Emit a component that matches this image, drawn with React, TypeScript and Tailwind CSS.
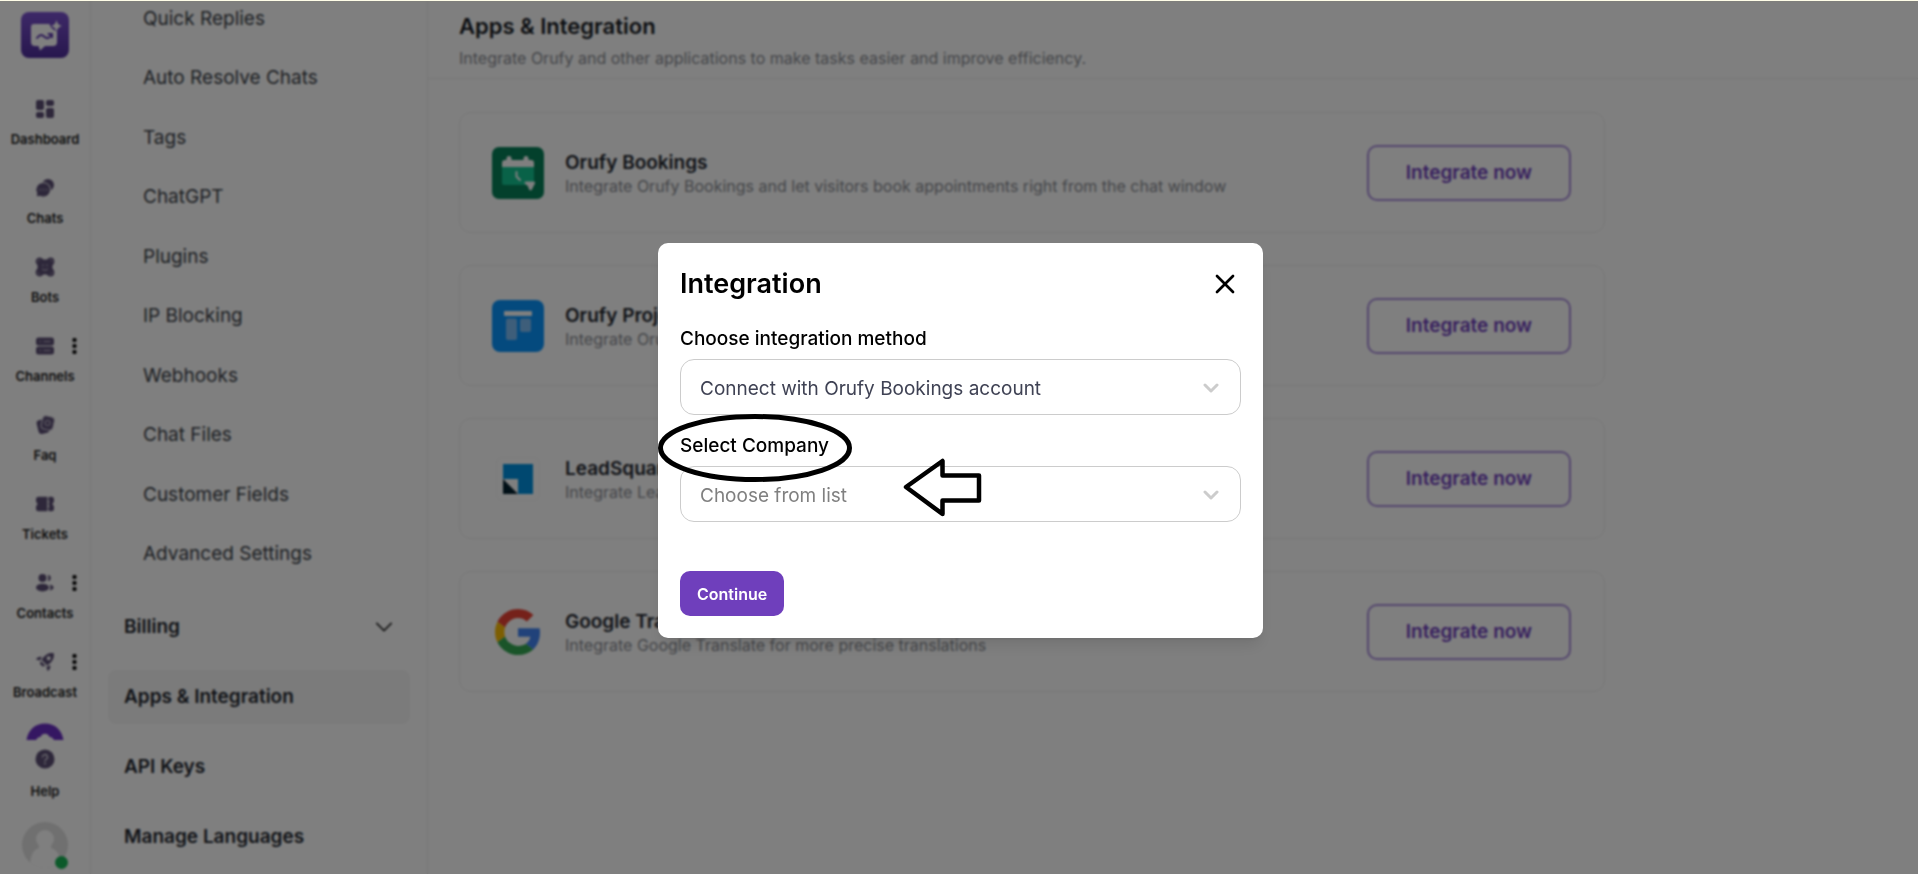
import React, { useState } from 'react';
import { X } from 'lucide-react';

type IconProps = { className?: string };

const DashboardIcon = () => (
  <svg viewBox="0 0 20 20" className="size-5" fill="currentColor">
    <rect x="1" y="1" width="8" height="10" rx="2" />
    <rect x="11" y="1" width="8" height="6" rx="2" />
    <rect x="1" y="13" width="8" height="6" rx="2" />
    <rect x="11" y="9" width="8" height="10" rx="2" />
  </svg>
);

const ChatsIcon = () => (
  <svg viewBox="0 0 20 20" className="size-5" fill="currentColor">
    <circle cx="13" cy="7" r="6" />
    <path d="M8.300 4.500a7.300 7.300 0 1 1-3.400 13.800L1.200 19l.6-3.600A7.300 7.300 0 0 1 8.300 4.500z" stroke="#fff" strokeWidth="1" />
    <g fill="#bbb5c6">
      <circle cx="5.200" cy="11.800" r=".8" />
      <circle cx="8.400" cy="11.800" r=".8" />
      <circle cx="11.600" cy="11.800" r=".8" />
    </g>
  </svg>
);

const BotsIcon = () => (
  <svg viewBox="0 0 20 20" className="size-5" fill="currentColor">
    <rect x="2.500" y="2.500" width="15" height="15" rx="3" />
    <g fill="none" stroke="currentColor" strokeWidth="1.800">
      <circle cx="4.500" cy="4.500" r="3" />
      <circle cx="15.500" cy="4.500" r="3" />
      <circle cx="4.500" cy="15.500" r="3" />
      <circle cx="15.500" cy="15.500" r="3" />
    </g>
    <path d="M8 7.800v1M12 7.800v1M7.600 12.200c1.400 1.200 3.400 1.200 4.800 0" stroke="#bbb5c6" strokeWidth="1.100" strokeLinecap="round" fill="none" />
  </svg>
);

const ChannelsIcon = () => (
  <svg viewBox="0 0 20 20" className="size-5" fill="currentColor">
    <rect x="1" y="1.500" width="18" height="8" rx="2.500" />
    <rect x="1" y="10.500" width="18" height="8" rx="2.500" />
    <path d="M5 5.500h.5M9 5.500h6M5 14.500h.5M9 14.500h6" stroke="#bbb5c6" strokeWidth="1.200" strokeLinecap="round" />
  </svg>
);

const FaqIcon = () => (
  <svg viewBox="0 0 20 20" className="size-5" fill="currentColor">
    <rect x="2.500" y="4.500" width="11" height="14" rx="3" transform="rotate(-14 8 11.500)" />
    <rect x="6.800" y="1.300" width="12" height="13.500" rx="3.500" transform="rotate(12 13 8)" stroke="#d8d4df" strokeWidth="1" />
    <circle cx="12.600" cy="8" r="2.500" fill="none" stroke="#bbb5c6" strokeWidth="1.100" />
  </svg>
);

const TicketsIcon = () => (
  <svg viewBox="0 0 20 20" className="size-5" fill="currentColor">
    <path d="M3.500 2.700h8.900v14.600H3.500A2.500 2.500 0 0 1 1 14.800v-2.900a2 2 0 0 0 0-3.800V5.200a2.500 2.500 0 0 1 2.500-2.500z" />
    <path d="M14 2.700h2.500A2.500 2.500 0 0 1 19 5.200v2.900a2 2 0 0 0 0 3.800v2.900a2.500 2.500 0 0 1-2.500 2.500H14l-.9-2.300.9-2.400v-1.600l-.9-1.100.9-1.100V7.500l-.9-2.400z" />
  </svg>
);

const ContactsIcon = () => (
  <svg viewBox="0 0 20 20" className="size-5" fill="currentColor">
    <circle cx="7.500" cy="5" r="4" />
    <path d="M12.800 2a3 3 0 0 1 0 6c.7-1.800.7-4.200 0-6z" />
    <ellipse cx="7.500" cy="14.600" rx="6.500" ry="3.900" />
    <path d="M14.600 11.800c2.600.3 4 1.400 4 2.800s-1.400 2.500-4 2.800c1-1.700 1-3.900 0-5.600z" />
  </svg>
);

const BroadcastIcon = () => (
  <svg viewBox="0 0 20 20" className="size-5" fill="currentColor">
    <path fillRule="evenodd" d="M18.800 1.200c.6 4.600-.8 8-6.600 12.300l-5.700-5.700C10.800 2 14.200.6 18.800 1.200zM13.700 4.300a2 2 0 1 0 0 4 2 2 0 0 0 0-4z" />
    <path d="M6.800 4.800 5.200 8.600 1 7.500c1-2.400 3.200-3.200 5.800-2.700zM15.200 13.200l-3.800 1.600 1.100 4.200c2.400-1 3.200-3.200 2.700-5.800z" />
    <path d="M5.800 9 10.600 13.700 7.600 14.600 4.900 12z" />
  </svg>
);

const HelpIcon = () => (
  <svg viewBox="0 0 20 20" className="size-5">
    <circle cx="10" cy="10" r="9.500" fill="currentColor" />
    <path d="M7.500 8a2.500 2.500 0 1 1 3.700 2.200c-.8.500-1.200.9-1.200 1.800" fill="none" stroke="#d8d4df" strokeWidth="1.300" strokeLinecap="round" />
    <circle cx="10" cy="14.500" r=".9" fill="#d8d4df" />
  </svg>
);

const ConnectLogo = () => (
  <svg viewBox="0 0 48 46" className="h-[46px] w-12">
    <defs>
      <linearGradient id="logoFill" x1="0" y1="0" x2="0" y2="1">
        <stop offset="0" stopColor="#7c52d0" />
        <stop offset="1" stopColor="#4f2f9c" />
      </linearGradient>
    </defs>
    <rect width="48" height="46" rx="8" fill="url(#logoFill)" />
    <path d="M13 12h15.500c.5 3 3.500 6 7.500 7.500V30a4 4 0 0 1-4 4h-8l-5 4.500L17.500 34H14a4 4 0 0 1-4-4V15a3 3 0 0 1 3-3z" fill="#fff" />
    <path d="M16 26c3-4 5-3.500 7.500-1.200s4.500 1.700 7.500-2.300M27.500 22h3.500v3.200" fill="none" stroke="#5f39b0" strokeWidth="2" strokeLinecap="round" strokeLinejoin="round" />
    <path d="M35.500 8c1 3.900 2.200 5.200 6 6-3.800.9-5 2.200-6 6-1-3.800-2.200-5.100-6-6 3.800-.8 5-2.100 6-6z" fill="#fff" />
  </svg>
);

const BookingsLogo = () => (
  <svg viewBox="0 0 52 52" className="size-[52px]">
    <rect width="52" height="52" rx="7" fill="#068058" />
    <path d="M10 20h32v18H12a2 2 0 0 1-2-2z" fill="#13c491" />
    <path d="M10 20v-4a3 3 0 0 1 3-3h1.500v-1.500a2.500 2.500 0 0 1 5 0V13h12v-1.500a2.500 2.500 0 0 1 5 0V13H39a3 3 0 0 1 3 3v4z" fill="#fff" />
    <path d="M24.500 25v4.500l3.500 3.500" fill="none" stroke="#fff" strokeWidth="2" strokeLinecap="round" />
    <path d="M34 34.500h7.500a1.500 1.500 0 0 1 1.400 2l-3 6a1.500 1.500 0 0 1-2.700 0l-1.400-3.500-2.800-2.200c-1-.8-.4-2.300 1-2.300z" fill="#fff" />
  </svg>
);

const ProjectsLogo = () => (
  <svg viewBox="0 0 52 52" className="size-[52px]">
    <rect width="52" height="52" rx="8" fill="#0894fd" />
    <rect x="12" y="11" width="28" height="5" rx="1" fill="#fff" />
    <rect x="14" y="18.500" width="11" height="21.500" rx="2" fill="#7dbdf5" />
    <rect x="28" y="18.500" width="11" height="13.500" rx="2" fill="#7dbdf5" />
  </svg>
);

const LeadSquaredLogo = () => (
  <svg viewBox="0 0 52 52" className="size-[52px]">
    <rect x="4.500" y="4.500" width="43" height="43" rx="6" fill="#fff" stroke="#f5f5f5" />
    <path d="M11 11h30v30H26V26H11z" fill="#0091e0" />
    <path d="M11 26v15h15z" fill="#03202e" />
  </svg>
);

const GoogleLogo = () => (
  <svg viewBox="0 0 48 48" className="m-[3px] size-[46px]">
    <path fill="#EA4335" d="M24 9.500c3.540 0 6.710 1.220 9.210 3.600l6.850-6.850C35.900 2.380 30.470 0 24 0 14.620 0 6.510 5.380 2.560 13.220l7.980 6.190C12.430 13.720 17.740 9.500 24 9.500z" />
    <path fill="#4285F4" d="M46.980 24.550c0-1.570-.15-3.090-.38-4.550H24v9.020h12.940c-.58 2.960-2.260 5.480-4.780 7.180l7.730 6c4.510-4.180 7.090-10.360 7.090-17.650z" />
    <path fill="#FBBC05" d="M10.530 28.590c-.48-1.450-.76-2.990-.76-4.590s.27-3.140.76-4.590l-7.980-6.190C.92 16.460 0 20.120 0 24c0 3.880.92 7.540 2.560 10.780l7.970-6.190z" />
    <path fill="#34A853" d="M24 48c6.480 0 11.930-2.130 15.890-5.810l-7.730-6c-2.150 1.450-4.920 2.300-8.160 2.300-6.260 0-11.570-4.220-13.470-9.910l-7.980 6.190C6.510 42.620 14.620 48 24 48z" />
  </svg>
);

const MoreDots = () => (
  <svg viewBox="0 0 5 16" className="absolute left-[72px] top-[17px] h-4 w-[5px]" fill="#111">
    <rect x="0.500" y="0" width="4" height="4" rx="1" />
    <rect x="0.500" y="6" width="4" height="4" rx="1" />
    <rect x="0.500" y="12" width="4" height="4" rx="1" />
  </svg>
);

const Chevron = ({ className }: IconProps) => (
  <svg viewBox="0 0 16 10" className={className} fill="none" stroke="currentColor" strokeLinecap="round" strokeLinejoin="round">
    <path d="M2 2l6 6 6-6" />
  </svg>
);

const navItems = [
  { label: 'Dashboard', icon: DashboardIcon },
  { label: 'Chats', icon: ChatsIcon },
  { label: 'Bots', icon: BotsIcon },
  { label: 'Channels', icon: ChannelsIcon, more: true },
  { label: 'Faq', icon: FaqIcon },
  { label: 'Tickets', icon: TicketsIcon },
  { label: 'Contacts', icon: ContactsIcon, more: true },
  { label: 'Broadcast', icon: BroadcastIcon, more: true },
];

const settingsItems = [
  'Quick Replies',
  'Auto Resolve Chats',
  'Tags',
  'ChatGPT',
  'Plugins',
  'IP Blocking',
  'Webhooks',
  'Chat Files',
  'Customer Fields',
  'Advanced Settings',
];

const sections = [
  { label: 'Billing', expandable: true },
  { label: 'Apps & Integration', active: true },
  { label: 'API Keys' },
  { label: 'Manage Languages' },
];

const apps = [
  {
    name: 'Orufy Bookings',
    text: 'Integrate Orufy Bookings and let visitors book appointments right from the chat window',
    logo: BookingsLogo,
  },
  { name: 'Orufy Projects', text: 'Integrate Orufy Projects', logo: ProjectsLogo },
  { name: 'LeadSquared', text: 'Integrate LeadSquared', logo: LeadSquaredLogo },
  {
    name: 'Google Translate',
    text: 'Integrate Google Translate for more precise translations',
    logo: GoogleLogo,
  },
];

const Sidebar = () => (
  <aside className="flex w-[91px] shrink-0 flex-col items-center border-r border-[#ededed] pt-[11px]">
    <a href="#home" aria-label="Home">
      <ConnectLogo />
    </a>
    <nav className="mt-[26px] w-full text-[#5c4f75]">
      {navItems.map(({ label, icon: Icon, more }) => (
        <a key={label} href={`#${label.toLowerCase()}`} className="relative flex h-[79px] flex-col items-center gap-2.5 pt-[15px]">
          <Icon />
          {more && <MoreDots />}
          <span className="text-[13px] leading-5 font-semibold text-[#1c1c1c]">{label}</span>
        </a>
      ))}
      <div className="flex h-6 items-end justify-center">
        <svg viewBox="0 0 38 17" className="h-[17px] w-[38px]">
          <path d="M0.500 17C2 7 9 0.500 19 0.500S36 7 37.500 17H28c-1.500-2.500-3-3-4.500-3-1-2-2.500-3.200-4.500-3.200S15.500 12 14.500 14c-1.500 0-3 .5-4.500 3z" fill="#6b2fc4" />
        </svg>
      </div>
    </nav>
    <a href="#help" className="mt-[9px] flex flex-col items-center gap-3 text-[#5c4f75]">
      <HelpIcon />
      <span className="text-[13px] leading-5 font-semibold text-[#1c1c1c]">Help</span>
    </a>
    <button type="button" aria-label="Profile" className="relative mt-[21px]">
      <svg viewBox="0 0 46 46" className="size-[46px]">
        <clipPath id="avatarClip">
          <circle cx="23" cy="23" r="23" />
        </clipPath>
        <g clipPath="url(#avatarClip)">
          <rect width="46" height="46" fill="#e0e0e0" />
          <circle cx="23" cy="17" r="9" fill="#fff" />
          <path d="M17 22h12v4c5 1.500 10 6 10 20H8c0-14 4-18.500 9-20z" fill="#fff" />
        </g>
      </svg>
      <span className="absolute -bottom-px right-0 size-[13px] rounded-full bg-[#18b455]" />
    </button>
  </aside>
);

const SettingsMenu = () => (
  <nav className="w-[337px] shrink-0 overflow-hidden border-r border-[#ededed]">
    <ul className="-mt-3 grid h-[595px] auto-rows-fr text-[19px] text-[#3a3f47]">
      {settingsItems.map((item) => (
        <li key={item} className="flex items-center pl-[52px]">
          <a href="#settings">{item}</a>
        </li>
      ))}
    </ul>
    <ul className="mt-4 flex flex-col gap-4 px-[17px] text-[19px] font-semibold text-[#22262e]">
      {sections.map(({ label, expandable, active }) => (
        <li key={label} className={`flex h-[54px] shrink-0 items-center justify-between rounded-lg px-4 ${active ? 'bg-[#f6f6f6]' : ''}`}>
          <a href="#section">{label}</a>
          {expandable && <Chevron className="h-3 w-5 stroke-[1.5] text-[#333333]" />}
        </li>
      ))}
    </ul>
  </nav>
);

const Main = () => (
  <main className="min-w-0 flex-1">
    <header className="flex flex-col gap-2 border-b border-[#ededed] px-[31px] pt-[11px] pb-2.5">
      <h1 className="text-[22px] leading-7 font-semibold text-[#181c24]">Apps &amp; Integration</h1>
      <p className="text-base leading-5 text-[#8a8d93]">Integrate Orufy and other applications to make tasks easier and improve efficiency.</p>
    </header>
    <div className="mt-[33px] flex max-w-[1208px] flex-col gap-8 px-[31px]">
      {apps.map(({ name, text, logo: Logo }) => (
        <article key={name} className="flex h-[121px] items-center rounded-xl border border-[#ededed] pr-[33px] pl-8">
          <Logo />
          <div className="ml-[21px] flex-1">
            <h2 className="text-[19px] leading-[26px] font-semibold text-[#22262e]">{name}</h2>
            <p className="text-base leading-5 text-[#8a8d93]">{text}</p>
          </div>
          <button type="button" className="h-14 rounded-[10px] border-2 border-[#a88cdb] px-[37px] pt-0.5 text-[19px] font-semibold text-[#6f3fbc]">
            Integrate now
          </button>
        </article>
      ))}
    </div>
  </main>
);

const IntegrationModal = () => {
  const [company, setCompany] = useState('');
  const selectClass = 'h-14 w-full appearance-none rounded-[14px] border border-[#cccccc] bg-white px-[19px] pt-1 text-[19px]';
  const chevronClass = 'pointer-events-none absolute right-[22px] top-6 h-[10px] w-4 stroke-3 text-[#cccccc]';

  return (
    <div role="dialog" aria-labelledby="modal-title" className="relative w-[605px] rounded-[10px] bg-white px-[22px] pt-[23px] pb-[22px] shadow-lg">
      <div className="flex items-center justify-between">
        <h2 id="modal-title" className="text-[27px] leading-9 font-semibold text-black">Integration</h2>
        <button type="button" aria-label="Close" className="text-black">
          <X size={32} strokeWidth={2} />
        </button>
      </div>

      <label htmlFor="method" className="mt-[23px] block text-[19px] leading-7 font-medium text-black">
        Choose integration method
      </label>
      <div className="relative mt-1.5">
        <select id="method" className={`${selectClass} text-[#3f4254]`}>
          <option>Connect with Orufy Bookings account</option>
        </select>
        <Chevron className={chevronClass} />
      </div>

      <label htmlFor="company" className="mt-[17px] block text-[19px] leading-7 font-medium text-black">
        Select Company
      </label>
      <div className="relative mt-1.5">
        <select id="company" value={company} onChange={(e) => setCompany(e.target.value)} className={`${selectClass} text-[#808080]`}>
          <option value="">Choose from list</option>
        </select>
        <Chevron className={chevronClass} />
      </div>

      <button type="button" className="mt-[49px] h-[45px] rounded-[10px] bg-[#6f3fbc] px-[17px] text-base font-semibold text-white">
        Continue
      </button>

      {/* hand-drawn marks over the company field */}
      <svg viewBox="0 0 340 110" className="pointer-events-none absolute left-0 top-[168px] h-[110px] w-[340px]" fill="none" stroke="#000" strokeLinejoin="round">
        <ellipse cx="97" cy="37" rx="94.500" ry="31.500" strokeWidth="5" />
        <path d="M248 76L284.500 50v14.500H321v25H284.500V103z" strokeWidth="4.500" />
      </svg>
    </div>
  );
};

const App = () => {
  return (
    <div className="relative h-screen overflow-hidden border-t border-[#fffde8] bg-white font-['Inter',sans-serif]">
      <div className="flex h-full">
        <Sidebar />
        <SettingsMenu />
        <Main />
      </div>
      <div className="absolute inset-0 flex items-center justify-center bg-black/50 pt-1.5 pl-[3px] backdrop-blur-[1px]">
        <IntegrationModal />
      </div>
    </div>
  );
};

export default App;
